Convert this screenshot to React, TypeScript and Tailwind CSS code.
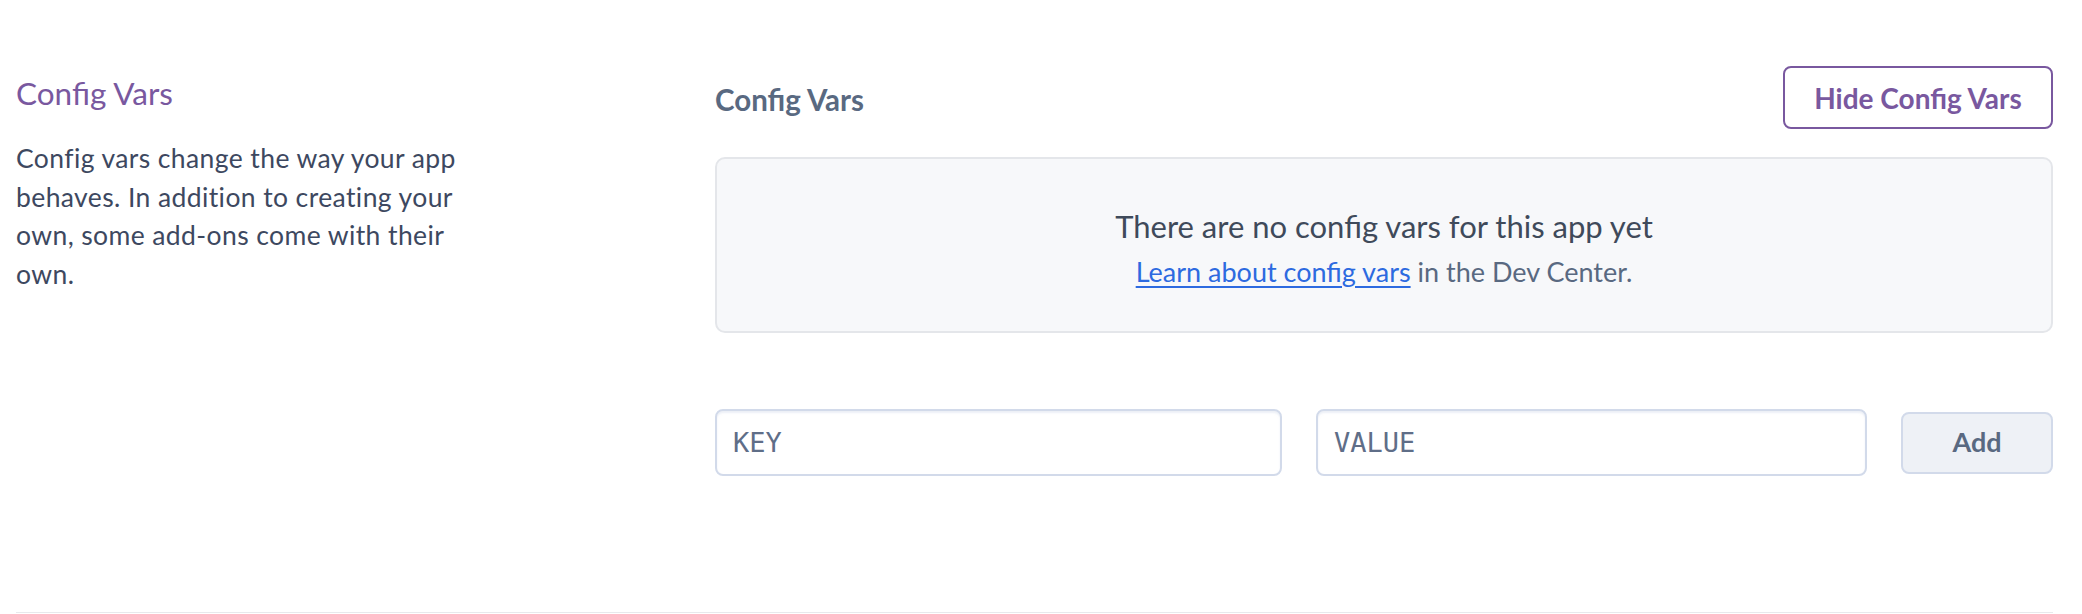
import { useState } from 'react';

export default function App() {
  const [key, setKey] = useState('');
  const [value, setValue] = useState('');
  const [shown, setShown] = useState(true);

  return (
    <div className="min-h-[614px] bg-white pl-[16px] pr-[29px] font-['Lato','Noto_Sans',sans-serif]">
      <section className="flex border-b border-[#e8e9ec] pb-[136px]">
        {/* left: description */}
        <div className="w-[699px] shrink-0 pt-[75px]">
          <h2 className="text-[31.5px] leading-[36px] text-[#79589f]">Config Vars</h2>
          <p className="mt-[28px] w-[464px] text-[26.5px] leading-[38.5px] tracking-[0.4px] text-[#3d4860]">
            Config vars change the way your app behaves. In addition to creating your own, some
            add-ons come with their own.
          </p>
        </div>

        {/* right: editor */}
        <div className="flex-1 pt-[66px]">
          <div className="flex h-[63px] items-center justify-between">
            <h3 className="pt-[5px] text-[29.5px] font-bold text-[#596981]">Config Vars</h3>
            <button
              onClick={() => setShown(!shown)}
              className="h-[63px] w-[270px] rounded-[8px] border-2 border-[#79589f] bg-white text-[28px] font-bold text-[#79589f]"
            >
              {shown ? 'Hide Config Vars' : 'Reveal Config Vars'}
            </button>
          </div>

          <div className="mt-[28px] flex h-[176px] flex-col items-center justify-center rounded-[10px] border-2 border-[#e4e6ea] bg-[#f7f8fa]">
            <p className="mt-[5px] text-[31px] leading-[36px] text-[#3f4a5a]">
              There are no config vars for this app yet
            </p>
            <p className="mt-[12px] text-[27px] leading-[32px] text-[#596981]">
              <a href="#" className="text-[#2d6ae0] underline decoration-2 underline-offset-4">
                Learn about config vars
              </a>{' '}
              in the Dev Center.
            </p>
          </div>

          <div className="mt-[76px] flex items-center gap-[34px]">
            <input
              value={key}
              onChange={(e) => setKey(e.target.value)}
              placeholder="KEY"
              className="h-[67px] w-[567px] rounded-[8px] border-2 border-[#d2daea] bg-white px-[16px] font-['DejaVu_Sans_Mono',monospace] text-[27px] text-[#596981] shadow-[inset_0_2px_2px_rgba(200,210,230,0.35)] outline-none placeholder:text-[#5f6e88]"
            />
            <input
              value={value}
              onChange={(e) => setValue(e.target.value)}
              placeholder="VALUE"
              className="h-[67px] flex-1 rounded-[8px] border-2 border-[#d2daea] bg-white px-[16px] font-['DejaVu_Sans_Mono',monospace] text-[27px] text-[#596981] shadow-[inset_0_2px_2px_rgba(200,210,230,0.35)] outline-none placeholder:text-[#5f6e88]"
            />
            <button className="h-[62px] w-[152px] rounded-[8px] border-2 border-[#d2daea] bg-[#eef1f6] text-[27px] font-bold text-[#596981]">
              Add
            </button>
          </div>
        </div>
      </section>
    </div>
  );
}
